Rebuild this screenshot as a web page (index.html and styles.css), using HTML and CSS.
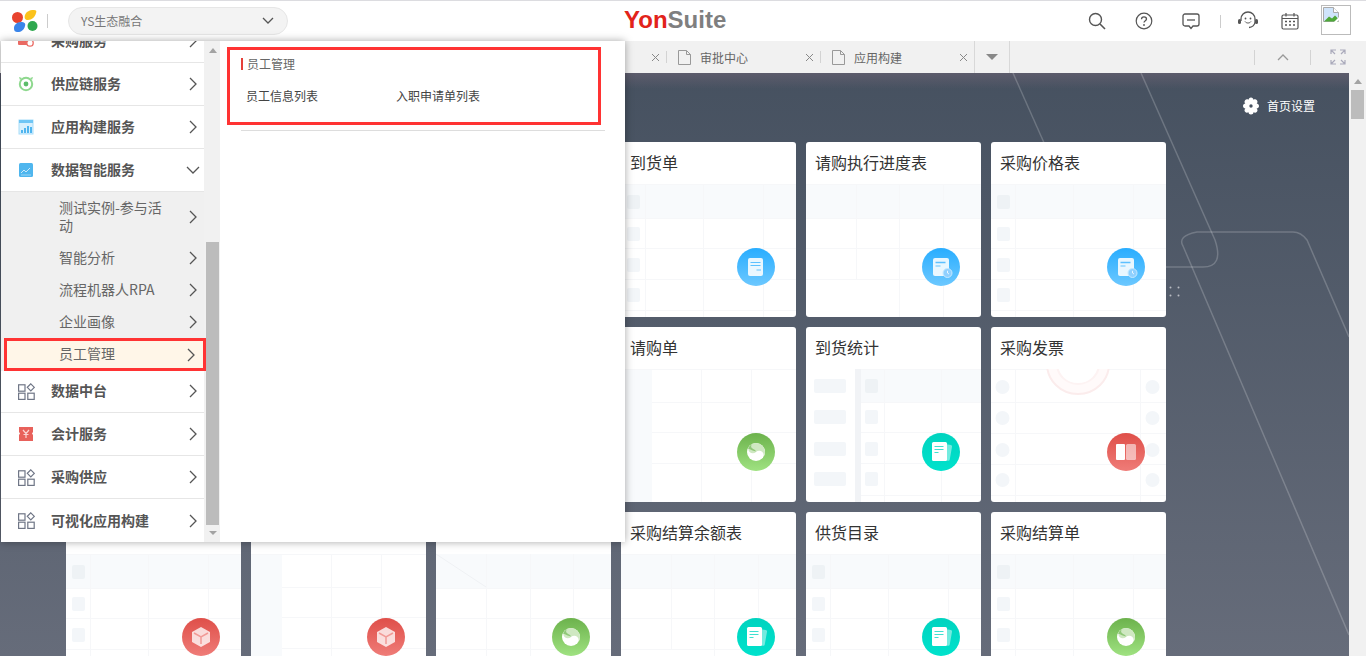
FILE: index.html
```html
<!DOCTYPE html>
<html lang="zh-CN">
<head>
<meta charset="utf-8">
<title>YonSuite</title>
<link rel="stylesheet" href="styles.css">
</head>
<body>
<svg class="defs" width="0" height="0" aria-hidden="true">
  <defs>
    <symbol id="chev-r" viewBox="0 0 8 14"><path d="M1 1l6 6-6 6" fill="none" stroke="currentColor" stroke-width="1.3"/></symbol>
    <symbol id="grid" viewBox="0 0 17 17"><g fill="none" stroke="#6f7686" stroke-width="1.2"><rect x=".6" y="1.800" width="6.400" height="6.400"/><rect x=".6" y="10.200" width="6.400" height="6.200"/><rect x="9.800" y="10.200" width="6.400" height="6.200"/><path d="M12.800.8l3.500 3.500-3.500 3.500-3.500-3.500z"/></g></symbol>
    <symbol id="file" viewBox="0 0 13 15"><path d="M.5.5h8l4 4v10H.5zM8.500.5v4h4" fill="none" stroke="#999"/></symbol>
    <symbol id="close" viewBox="0 0 9 9"><path d="M1 1l7 7M8 1L1 8" fill="none" stroke="#888"/></symbol>

    <symbol id="wire-a" viewBox="0 0 175 133">
      <rect width="175" height="34" fill="#f8fafc"/>
      <path d="M0 .5h175M0 34.500h175M0 64.500h175M0 95.500h175M0 126.500h175M24.500 0v133M82.500 0v133M142.500 0v133" stroke="#f6f7f9" fill="none"/>
      <rect x="6" y="11" width="13" height="14" rx="2" fill="#eef2f5"/>
      <rect x="6" y="43" width="13" height="14" rx="2" fill="#f3f6f9"/>
      <rect x="6" y="74" width="13" height="14" rx="2" fill="#f3f6f9"/>
      <rect x="6" y="104" width="13" height="14" rx="2" fill="#f3f6f9"/>
    </symbol>
    <symbol id="wire-b" viewBox="0 0 175 133">
      <rect width="175" height="34" fill="#f8fafc"/>
      <path d="M0 .5h175M0 34.500h175M0 64.500h175M0 95.500h175M50.500 0v95M93.500 0v133M137.500 0v133" stroke="#f6f7f9" fill="none"/>
    </symbol>
    <symbol id="wire-c" viewBox="0 0 175 133">
      <rect width="31" height="133" fill="#f8fafc"/>
      <path d="M0 .5h175M31 33.500h99M31 63.500h144M31 94.500h144M80.500 0v133M130.500 0v133" stroke="#f6f7f9" fill="none"/>
    </symbol>
    <symbol id="wire-d" viewBox="0 0 175 133">
      <rect x="55" width="120" height="33" fill="#f8fafc"/>
      <rect x="49" width="6" height="133" fill="#f1f3f6"/>
      <path d="M55 .5h120M55 33.500h120M55 63.500h120M55 94.500h120M55 126.500h120M78.500 0v133M135.500 0v133" stroke="#f6f7f9" fill="none"/>
      <rect x="8" y="10" width="32" height="14" rx="2" fill="#f3f6f9"/>
      <rect x="8" y="41" width="32" height="14" rx="2" fill="#f3f6f9"/>
      <rect x="8" y="73" width="32" height="14" rx="2" fill="#f3f6f9"/>
      <rect x="8" y="103" width="32" height="14" rx="2" fill="#f3f6f9"/>
      <rect x="59" y="10" width="13" height="14" rx="2" fill="#eef2f5"/>
      <rect x="59" y="41" width="13" height="14" rx="2" fill="#f3f6f9"/>
      <rect x="59" y="73" width="13" height="14" rx="2" fill="#f3f6f9"/>
      <rect x="59" y="103" width="13" height="14" rx="2" fill="#f3f6f9"/>
    </symbol>
    <symbol id="wire-e" viewBox="0 0 175 133">
      <path d="M0 .5h175M0 33.500h175M0 64.500h175M0 95.500h175M0 126.500h175M24.500 0v133M149.500 0v133" stroke="#f6f7f9" fill="none"/>
      <ellipse cx="87" cy="-5" rx="31" ry="30" fill="#fffafa" stroke="#fbecec" stroke-width="2"/>
      <ellipse cx="87" cy="-5" rx="21" ry="20" fill="#fff" stroke="#fdf3f3" stroke-width="2"/>
      <g fill="#f3f6f9"><circle cx="11.500" cy="18" r="7"/><circle cx="11.500" cy="49" r="7"/><circle cx="11.500" cy="81" r="7"/><circle cx="11.500" cy="111" r="7"/><circle cx="161.500" cy="18" r="7"/><circle cx="161.500" cy="49" r="7"/><circle cx="161.500" cy="81" r="7"/><circle cx="161.500" cy="111" r="7"/></g>
    </symbol>
    <symbol id="wire-f" viewBox="0 0 175 133">
      <rect width="175" height="34" fill="#f8fafc"/>
      <path d="M0 0L50 33" stroke="#eff1f4" fill="none"/>
      <path d="M0 34.500h175M0 64.500h175M0 95.500h175M50.500 0v133M94.500 0v133M137.500 0v133" stroke="#f6f7f9" fill="none"/>
    </symbol>

    <symbol id="g-doc" viewBox="0 0 38 38"><rect x="11" y="10" width="15" height="18" rx="2" fill="#fff" fill-opacity=".88"/><path d="M13.500 14.500h10M13.500 17.500h10" stroke="#5cc0ff" stroke-width="1.2"/><path d="M19.500 22h4.500" stroke="#8fd4ff" stroke-width="1.600"/></symbol>
    <symbol id="g-clock" viewBox="0 0 38 38"><rect x="11" y="10" width="16" height="18" rx="2" fill="#fff" fill-opacity=".88"/><path d="M13.500 14.500h10" stroke="#5cc0ff" stroke-width="1.400"/><path d="M13.500 18h5" stroke="#8fd4ff" stroke-width="1.400"/><circle cx="25.500" cy="25" r="4.500" fill="#8fd0ff" stroke="#c5e8ff"/><path d="M25.500 22.800V25l1.500 1" stroke="#fff" fill="none" stroke-width=".8"/></symbol>
    <symbol id="g-yin" viewBox="0 0 38 38"><circle cx="19" cy="19" r="9" fill="#fff"/><path d="M12.600 12.600a9 9 0 0 1 12.800 12.800 4.500 4.500 0 0 0-6.400-6.400 4.500 4.500 0 0 1-6.400-6.400z" fill="#cfe8c2"/><path d="M11 15.500a9 9 0 0 1 4-4.500c-1.500 2-1 3.500.5 4.500 1.500 1 3 1.500 3.500 3-2.500-.5-5.500-2-8-3z" fill="#8fc878"/></symbol>
    <symbol id="g-paper" viewBox="0 0 38 38"><rect x="16" y="11" width="13" height="16" rx="1.500" fill="#fff" fill-opacity=".45" transform="rotate(10 22 19)"/><rect x="10" y="9" width="15" height="19" rx="1.500" fill="#fff"/><path d="M12.500 13.500h9M12.500 16.500h9" stroke="#3fe0d0" stroke-width="1.100"/><path d="M12.500 19.500h4" stroke="#3fe0d0" stroke-width="1.100"/></symbol>
    <symbol id="g-book" viewBox="0 0 38 38"><rect x="9" y="11" width="9" height="16" rx="1" fill="#fff"/><rect x="19" y="11" width="10" height="16" rx="1.500" fill="#fff" fill-opacity=".55"/></symbol>
    <symbol id="g-cube" viewBox="0 0 38 38"><path d="M19 9l9 5v10l-9 5-9-5V14z" fill="#fff" fill-opacity=".78"/><path d="M12 15l7 4 7-4M19 19v7" stroke="#f19a96" stroke-width="1.500" fill="none"/></symbol>
  </defs>
</svg>

<header class="topbar">
  <svg class="logo" width="26" height="24" viewBox="0 0 26 24">
    <circle cx="5.500" cy="8.500" r="5.500" fill="#e8432e"/>
    <path d="M13 6c1-3 4-5 9-5 2 0 3 1 2 3-1 4-4 7-8 7-3 0-4-2-3-5z" fill="#fbc21b"/>
    <path d="M2 19c0-3 3-6 7-6 3 0 5 1 4 4-1 4-4 6-7 6-3 0-4-1-4-4z" fill="#3a85ea"/>
    <circle cx="20.500" cy="17" r="5" fill="#2fa84f"/>
  </svg>
  <i class="logo-sep"></i>
  <div class="select">
    <span>YS生态融合</span>
    <svg width="12" height="7" viewBox="0 0 12 7"><path d="M1 1l5 5 5-5" fill="none" stroke="#555" stroke-width="1.300"/></svg>
  </div>
  <div class="brand"><span class="brand-a">Yon</span><span class="brand-b">Suite</span></div>
  <div class="tools">
    <div class="tool-group">
      <svg width="18" height="18" viewBox="0 0 18 18"><circle cx="7.500" cy="7.500" r="6" fill="none" stroke="#555" stroke-width="1.400"/><path d="M12 12l5 5" stroke="#555" stroke-width="1.600"/></svg>
      <svg width="18" height="18" viewBox="0 0 18 18"><circle cx="9" cy="9" r="7.800" fill="none" stroke="#555" stroke-width="1.200"/><path d="M6.500 7.200c0-1.500 1.100-2.400 2.500-2.400s2.500.9 2.500 2.200c0 1.700-2.500 1.700-2.500 3.600" fill="none" stroke="#555" stroke-width="1.300"/><circle cx="9" cy="13" r=".9" fill="#555"/></svg>
      <svg width="18" height="18" viewBox="0 0 18 18"><path d="M3 2h12a2 2 0 0 1 2 2v8a2 2 0 0 1-2 2h-4l-2 2.500L7 14H3a2 2 0 0 1-2-2V4a2 2 0 0 1 2-2z" fill="none" stroke="#555" stroke-width="1.300"/><path d="M5 8h8" stroke="#555" stroke-width="1.300"/></svg>
    </div>
    <i class="tool-sep"></i>
    <svg class="tool-head" width="22" height="18" viewBox="0 0 22 18"><path d="M4 10V8a7 7 0 0 1 14 0v3c0 3-3 5.500-6 5.500" fill="none" stroke="#555" stroke-width="1.300"/><rect x="1" y="8" width="3" height="5" rx="1.500" fill="#555"/><rect x="18" y="8" width="3" height="5" rx="1.500" fill="#555"/><circle cx="8.500" cy="7.500" r=".9" fill="#555"/><circle cx="13.500" cy="7.500" r=".9" fill="#555"/><path d="M8 10.500c1.500 2 4.500 2 6 0" fill="none" stroke="#555"/></svg>
    <svg class="tool-cal" width="18" height="18" viewBox="0 0 18 18"><rect x="1" y="3" width="16" height="14" rx="1.500" fill="none" stroke="#555" stroke-width="1.200"/><path d="M1 6.500h16M5 1v3.500M13 1v3.500" stroke="#555" stroke-width="1.200"/><path d="M4 9.500h2M8 9.500h2M12 9.500h2M4 13h2M8 13h2M12 13h2" stroke="#555" stroke-width="1.500"/></svg>
    <div class="avatar">
      <svg width="16" height="17" viewBox="0 0 16 17"><path d="M.5.500h10l5 5v9H.5z" fill="#cfe4fb" stroke="#aaa"/><path d="M10.500.5v5h5" fill="#fff" stroke="#aaa"/><path d="M1 14.500l5-5 3 2 3-3 3 3v3z" fill="#4ea83a"/><path d="M10 16l6-6v3l-3 3z" fill="#fff"/></svg>
    </div>
  </div>
</header>

<nav class="tabbar">
  <div class="tab tab-hidden"><svg class="tab-x" width="9" height="9"><use href="#close"/></svg></div>
  <i class="tab-sep"></i>
  <div class="tab"><svg width="13" height="15"><use href="#file"/></svg><span>审批中心</span><svg class="tab-x" width="9" height="9"><use href="#close"/></svg></div>
  <i class="tab-sep"></i>
  <div class="tab"><svg width="13" height="15"><use href="#file"/></svg><span>应用构建</span><svg class="tab-x" width="9" height="9"><use href="#close"/></svg></div>
  <div class="tab-more"><i class="tri"></i></div>
  <div class="tab-ctrl">
    <i class="tab-sep"></i>
    <div class="ctrl-up"><svg width="12" height="7" viewBox="0 0 12 7"><path d="M1 6l5-5 5 5" fill="none" stroke="#999" stroke-width="1.300"/></svg></div>
    <i class="tab-sep"></i>
    <svg class="ctrl-full" width="16" height="16" viewBox="0 0 16 16"><path d="M1 5V1h5M10 1h5v4M15 11v4h-5M6 15H1v-4M1 1l4 4M15 15l-4-4M15 1l-4 4M1 15l4-4" fill="none" stroke="#aab" stroke-width="1.200"/></svg>
  </div>
</nav>

<div class="stage">
  <main class="content">
    <svg class="decor" width="1349" height="583" viewBox="0 0 1349 583">
      <g fill="none" stroke="#fff" stroke-opacity=".2" stroke-width="1.500">
        <path d="M1013 0l60 135"/>
        <path d="M1141 0l74 167q9 27-12 27h-60"/>
        <path d="M1349 264l-42-97q-6-8-14-8h-96q-20 4-14 14l166 389"/>
      </g>
      <g fill="#fff" fill-opacity=".6"><circle cx="1170.500" cy="214.500" r="1"/><circle cx="1178.500" cy="214.500" r="1"/><circle cx="1170.500" cy="222.500" r="1"/><circle cx="1178.500" cy="222.500" r="1"/></g>
    </svg>
    <div class="settings">
      <svg width="18" height="18" viewBox="0 0 18 18"><path fill="#fff" fill-rule="evenodd" d="M9 .5c1.500 0 2.300 1 2.500 2.300 1.100-.7 2.500-.7 3.400.4 1 1.200.6 2.500-.3 3.400 1.300.2 2.400 1 2.400 2.400s-1.100 2.200-2.400 2.400c.9.900 1.300 2.200.3 3.400-.9 1.100-2.300 1.100-3.400.4-.2 1.300-1 2.300-2.500 2.300s-2.300-1-2.500-2.300c-1.100.7-2.500.7-3.400-.4-1-1.200-.6-2.500.3-3.400C2.100 11.200 1 10.400 1 9s1.100-2.200 2.400-2.400c-.9-.9-1.300-2.200-.3-3.400.9-1.100 2.300-1.100 3.400-.4C6.700 1.500 7.500.5 9 .5zM9 7.300a1.700 1.700 0 1 0 0 3.400 1.700 1.700 0 0 0 0-3.400z"/></svg>
      <span>首页设置</span>
    </div>
    <div class="cards">
      <article class="card"></article>
      <article class="card"></article>
      <article class="card"></article>
      <article class="card"><h3>到货单</h3><svg class="wire" width="175" height="133"><use href="#wire-a"/></svg><svg class="badge blue" width="38" height="38"><use href="#g-doc"/></svg></article>
      <article class="card"><h3>请购执行进度表</h3><svg class="wire" width="175" height="133"><use href="#wire-b"/></svg><svg class="badge blue" width="38" height="38"><use href="#g-clock"/></svg></article>
      <article class="card"><h3>采购价格表</h3><svg class="wire" width="175" height="133"><use href="#wire-a"/></svg><svg class="badge blue" width="38" height="38"><use href="#g-clock"/></svg></article>

      <article class="card"></article>
      <article class="card"></article>
      <article class="card"></article>
      <article class="card"><h3>请购单</h3><svg class="wire" width="175" height="133"><use href="#wire-c"/></svg><svg class="badge green" width="38" height="38"><use href="#g-yin"/></svg></article>
      <article class="card"><h3>到货统计</h3><svg class="wire" width="175" height="133"><use href="#wire-d"/></svg><svg class="badge teal" width="38" height="38"><use href="#g-paper"/></svg></article>
      <article class="card"><h3>采购发票</h3><svg class="wire" width="175" height="133"><use href="#wire-e"/></svg><svg class="badge red" width="38" height="38"><use href="#g-book"/></svg></article>

      <article class="card"><h3></h3><svg class="wire" width="175" height="133"><use href="#wire-a"/></svg><svg class="badge red" width="38" height="38"><use href="#g-cube"/></svg></article>
      <article class="card"><h3></h3><svg class="wire" width="175" height="133"><use href="#wire-c"/></svg><svg class="badge red" width="38" height="38"><use href="#g-cube"/></svg></article>
      <article class="card"><h3></h3><svg class="wire" width="175" height="133"><use href="#wire-f"/></svg><svg class="badge green" width="38" height="38"><use href="#g-yin"/></svg></article>
      <article class="card"><h3>采购结算余额表</h3><svg class="wire" width="175" height="133"><use href="#wire-b"/></svg><svg class="badge teal" width="38" height="38"><use href="#g-paper"/></svg></article>
      <article class="card"><h3>供货目录</h3><svg class="wire" width="175" height="133"><use href="#wire-a"/></svg><svg class="badge teal" width="38" height="38"><use href="#g-paper"/></svg></article>
      <article class="card"><h3>采购结算单</h3><svg class="wire" width="175" height="133"><use href="#wire-a"/></svg><svg class="badge green" width="38" height="38"><use href="#g-yin"/></svg></article>
    </div>
  </main>
  <aside class="page-scroll">
    <i class="arrow-up"></i>
    <i class="page-thumb"></i>
  </aside>
</div>

<section class="menu">
  <ul class="menu-list">
    <li class="menu-row">
      <svg class="m-ic" width="16" height="14" viewBox="0 0 16 14"><rect x="0" y="0" width="10" height="11" rx="1" fill="#ea6a63"/><circle cx="12" cy="9" r="3.200" fill="#fff" stroke="#ea6a63" stroke-width="1.300"/></svg>
      <span>采购服务</span><svg class="chev" width="8" height="14"><use href="#chev-r"/></svg>
    </li>
    <li class="menu-row">
      <svg class="m-ic" width="16" height="16" viewBox="0 0 16 16"><circle cx="8" cy="8" r="6.200" fill="none" stroke="#8ed88e" stroke-width="2"/><circle cx="8" cy="8" r="2.400" fill="#5cbd6a"/><path d="M1 1l3 1-2 2zM15 1l-3 1 2 2z" fill="#8ed88e"/></svg>
      <span>供应链服务</span><svg class="chev" width="8" height="14"><use href="#chev-r"/></svg>
    </li>
    <li class="menu-row">
      <svg class="m-ic" width="16" height="16" viewBox="0 0 16 16"><rect x="1" y="1" width="14" height="14" fill="#d8f0fd" stroke="#a8ddfa"/><rect x="1" y="1" width="14" height="3" fill="#70c6f5"/><path d="M4 14v-3M7 14V9M10 14V7M13 14V8" stroke="#4fb5ef" stroke-width="2"/></svg>
      <span>应用构建服务</span><svg class="chev" width="8" height="14"><use href="#chev-r"/></svg>
    </li>
    <li class="menu-row">
      <svg class="m-ic" width="16" height="16" viewBox="0 0 16 16"><rect x="1" y="1" width="14" height="14" rx="1.500" fill="#4fb6ee"/><path d="M3 11l3-3 2 2 4-4" fill="none" stroke="#cdeafb"/><path d="M3 13h10" stroke="#9bd6f7"/></svg>
      <span>数据智能服务</span><svg class="chev-d" width="14" height="8" viewBox="0 0 14 8"><path d="M1 1l6 6 6-6" fill="none" stroke="#555" stroke-width="1.300"/></svg>
    </li>
    <li class="sub-list">
      <div class="sub-row tall"><span>测试实例-参与活动</span><svg class="chev" width="8" height="14"><use href="#chev-r"/></svg></div>
      <div class="sub-row"><span>智能分析</span><svg class="chev" width="8" height="14"><use href="#chev-r"/></svg></div>
      <div class="sub-row"><span>流程机器人RPA</span><svg class="chev" width="8" height="14"><use href="#chev-r"/></svg></div>
      <div class="sub-row"><span>企业画像</span><svg class="chev" width="8" height="14"><use href="#chev-r"/></svg></div>
      <div class="sub-row active"><span>员工管理</span><svg class="chev" width="8" height="14"><use href="#chev-r"/></svg></div>
    </li>
    <li class="menu-row">
      <svg class="m-ic m-grid" width="17" height="17"><use href="#grid"/></svg>
      <span>数据中台</span><svg class="chev" width="8" height="14"><use href="#chev-r"/></svg>
    </li>
    <li class="menu-row">
      <svg class="m-ic" width="16" height="16" viewBox="0 0 16 16"><path d="M1 1h14v5l-1 1.500 1 1.500v6H1V9l1-1.500L1 6z" fill="#e8615b"/><path d="M5 4l3 3.500L11 4M8 7.500V12M5.500 8.500h5" stroke="#fbd4d2" stroke-width="1.200" fill="none"/></svg>
      <span>会计服务</span><svg class="chev" width="8" height="14"><use href="#chev-r"/></svg>
    </li>
    <li class="menu-row">
      <svg class="m-ic m-grid" width="17" height="17"><use href="#grid"/></svg>
      <span>采购供应</span><svg class="chev" width="8" height="14"><use href="#chev-r"/></svg>
    </li>
    <li class="menu-row">
      <svg class="m-ic m-grid" width="17" height="17"><use href="#grid"/></svg>
      <span>可视化应用构建</span><svg class="chev" width="8" height="14"><use href="#chev-r"/></svg>
    </li>
  </ul>
  <div class="menu-scroll">
    <i class="arrow-up"></i>
    <i class="menu-thumb"></i>
    <i class="arrow-down"></i>
  </div>
  <div class="panel">
    <div class="panel-box">
      <h4>员工管理</h4>
      <div class="panel-links"><a>员工信息列表</a><a>入职申请单列表</a></div>
    </div>
    <hr class="panel-rule">
  </div>
</section>
</body>
</html>
```

FILE: styles.css
```css
* { box-sizing: border-box; }
html, body { margin: 0; padding: 0; height: 656px; overflow: hidden; }
body {
  width: 1366px;
  display: flex;
  flex-direction: column;
  font-family: "Noto Sans CJK SC", "Noto Sans", sans-serif;
  background: #fff;
  color: #333;
}
i { display: block; font-style: normal; }
ul { list-style: none; margin: 0; padding: 0; }
.defs { position: absolute; }

/* top bar */
.topbar {
  height: 41px;
  flex: none;
  display: flex;
  align-items: center;
  background: #fff;
  border-top: 1px solid #dcdce0;
  padding-left: 12px;
}
.logo { flex: none; margin-top: -1px; }
.logo-sep { width: 1px; height: 14px; background: #ccc; margin-left: 9px; }
.select {
  width: 220px;
  height: 28px;
  margin-left: 20px;
  margin-top: -1px;
  padding: 0 13px 0 12px;
  display: flex;
  align-items: center;
  justify-content: space-between;
  background: #f3f3f3;
  border: 1px solid #e6e6e6;
  border-radius: 14px;
  font-size: 12px;
  color: #777;
}
.brand {
  margin-left: 336px;
  font-family: "Liberation Sans", sans-serif;
  font-weight: 700;
  font-size: 24px;
  line-height: 24px;
  margin-top: -2px;
}
.brand-a { color: #e2231a; }
.brand-b { color: #7f7f7f; }
.tools { margin-left: auto; display: flex; align-items: center; padding-right: 15px; }
.tool-group { display: flex; gap: 29px; align-items: center; }
.tool-sep { width: 1px; height: 13px; background: #ccc; margin: 0 16px 0 20px; }
.tool-head { margin-right: 22px; margin-top: -2px; }
.tool-cal { margin-right: 22px; }
.avatar {
  width: 30px;
  height: 30px;
  margin-top: -2px;
  border: 1px solid #bbb;
  display: flex;
  align-items: flex-start;
  padding: 1px 0 0 1px;
}

/* tab strip */
.tabbar {
  height: 32px;
  flex: none;
  display: flex;
  align-items: center;
  background: #f1f1f1;
  padding-left: 512px;
  font-size: 12px;
  color: #666;
}
.tab {
  width: 153px;
  height: 100%;
  display: flex;
  align-items: center;
  padding: 0 6px 0 11px;
}
.tab span { margin-left: 9px; flex: 1; }
.tab-hidden { width: 154px; justify-content: flex-end; }
.tab-x { flex: none; }
.tab-sep { width: 1px; height: 12px; background: #d3d3d3; flex: none; }
.tab-more {
  width: 36px;
  height: 100%;
  border-left: 1px solid #d8d8d8;
  border-right: 1px solid #d8d8d8;
  display: flex;
  align-items: center;
  justify-content: center;
}
.tri { width: 0; height: 0; border: 6px solid transparent; border-top: 6px solid #888; border-bottom: 0; }
.tab-ctrl { margin-left: auto; display: flex; align-items: center; padding-right: 20px; }
.tab-ctrl .tab-sep { height: 15px; }
.ctrl-up { width: 55px; display: flex; justify-content: center; }
.ctrl-full { margin-left: 19px; }

/* main */
.stage { flex: 1; min-height: 0; display: flex; }
.content {
  position: relative;
  flex: 1;
  min-width: 0;
  overflow: hidden;
  background:
    linear-gradient(180deg, #5d5c6c 0, rgba(93, 92, 108, 0) 16px),
    linear-gradient(180deg, #465160 0, #666c7a 100%);
}
.decor { position: absolute; left: 0; top: 0; }
.settings {
  position: relative;
  height: 69px;
  padding: 0 34px 4px 0;
  display: flex;
  align-items: center;
  justify-content: flex-end;
  gap: 7px;
  font-size: 12px;
  color: #fff;
}
.cards {
  position: relative;
  display: grid;
  grid-template-columns: repeat(6, 175px);
  grid-auto-rows: 175px;
  gap: 10px;
  padding-left: 66px;
}
.card {
  position: relative;
  background: #fff;
  border-radius: 3px;
  overflow: hidden;
}
.card h3 {
  margin: 0;
  height: 42px;
  padding-left: 9px;
  font-size: 16px;
  line-height: 40px;
  font-weight: 400;
  color: #333;
}
.wire { display: block; }
.badge {
  position: absolute;
  right: 21px;
  top: 106px;
  border-radius: 50%;
}
.blue { background: linear-gradient(180deg, #28adff, #6cc8ff); }
.green { background: linear-gradient(180deg, #6cb24c, #9fe281); }
.teal { background: linear-gradient(180deg, #00d3bf, #00e2cc); }
.red { background: linear-gradient(180deg, #df4f49, #ef7c78); }

.page-scroll { width: 17px; flex: none; background: #f1f1f1; padding: 0 2px; position: relative; }
.arrow-up { width: 0; height: 0; margin: 6px auto 0; border: 4px solid transparent; border-bottom: 5px solid #a3a3a3; border-top: 0; }
.arrow-down { width: 0; height: 0; margin: 0 auto; border: 4px solid transparent; border-top: 4px solid #a3a3a3; border-bottom: 0; }
.page-thumb { width: 13px; height: 29px; margin-top: 6px; background: #bcbcbc; }

/* overlay menu */
.menu {
  position: absolute;
  left: 1px;
  top: 41px;
  width: 624px;
  height: 501px;
  display: flex;
  background: #fff;
  overflow: hidden;
  box-shadow: 0 0 8px rgba(0, 0, 0, .35);
  z-index: 5;
  font-size: 14px;
}
.menu-list { width: 203px; flex: none; margin-top: -21px; }
.menu-row {
  height: 43px;
  display: flex;
  align-items: center;
  padding: 0 7px 0 17px;
  border-bottom: 1px solid #e6e6e6;
  font-weight: 700;
  color: #555;
}
.menu-row span { margin: -2px 0 0 17px; flex: 1; }
.menu-row:last-child { border-bottom: 0; }
.m-ic { flex: none; }
.m-grid { margin-right: -1px; }
.chev { flex: none; color: #555; margin-left: auto; }
.chev-d { flex: none; margin-right: -3px; }
.sub-list { background: #f0f0f0; color: #666; }
.sub-row {
  height: 32px;
  display: flex;
  align-items: center;
  padding: 0 7px 0 58px;
}
.sub-row span { line-height: 18px; margin-top: -2px; }
.sub-row.tall { height: 50px; }
.sub-row.tall span { flex: none; width: 108px; }
.sub-row.active {
  position: relative;
  z-index: 1;
  width: 202px;
  height: 33px;
  margin: 0 0 -1px 3px;
  padding: 0 8px 0 52px;
  background: #fff6e8;
  border: 3px solid #f33;
}
.sub-row.active span { margin-top: -4px; }
.menu-scroll {
  width: 16px;
  flex: none;
  background: #f1f1f1;
  display: flex;
  flex-direction: column;
  padding: 0 1px 0 2px;
}
.menu-scroll .arrow-up { margin-top: 7px; }
.menu-thumb { height: 283px; width: 13px; margin-top: 189px; background: #bcbcbc; }
.menu-scroll .arrow-down { margin-top: 6px; }

.panel { flex: 1; min-width: 0; padding: 6px 24px 0 7px; }
.panel-box {
  width: 374px;
  height: 78px;
  border: 3px solid #f33;
  padding: 8px 0 0 11px;
}
.panel-box h4 {
  margin: 0;
  height: 12px;
  padding-left: 4px;
  border-left: 2px solid #e5403a;
  font-size: 12px;
  line-height: 12px;
  font-weight: 400;
  color: #666;
}
.panel-links {
  display: flex;
  margin-top: 18px;
  padding-left: 5px;
  font-size: 12px;
  line-height: 16px;
  color: #444;
}
.panel-links a { width: 150px; }
.panel-rule { margin: 5px 0 0 14px; width: 364px; height: 1px; border: 0; background: #ddd; }
```
